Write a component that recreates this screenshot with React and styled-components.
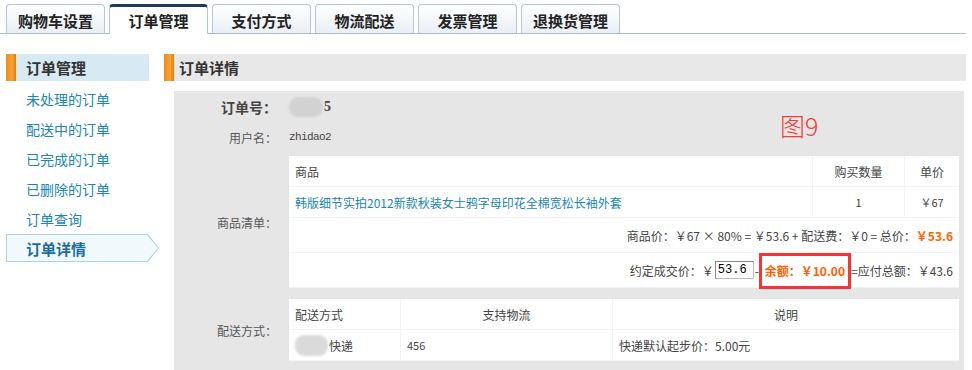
import React from 'react'
import styled, { createGlobalStyle } from 'styled-components'

const GlobalStyle = createGlobalStyle`
  body {
    margin: 0;
    background: #fff;
    font-family: "Noto Sans CJK SC", "Noto Sans", sans-serif;
    color: #333;
  }
`

const tabs = ['购物车设置', '订单管理', '支付方式', '物流配送', '发票管理', '退换货管理']
const menu = ['未处理的订单', '配送中的订单', '已完成的订单', '已删除的订单', '订单查询']

function App() {
  return (
    <>
      <GlobalStyle />
      <Page>
        <TabBar>
          {tabs.map((t, i) => (
            <Tab key={t} active={i === 1}>{t}</Tab>
          ))}
        </TabBar>
        <Body>
          <Sidebar>
            <SideHeader>订单管理</SideHeader>
            {menu.map((m) => (
              <MenuItem key={m}>{m}</MenuItem>
            ))}
            <ActiveItem><span>订单详情</span></ActiveItem>
          </Sidebar>
          <Main>
            <MainHeader>订单详情</MainHeader>
            <Panel>
              <Note>图9</Note>
              <Field h={31}>
                <Label bold>订单号：</Label>
                <Value>
                  <Blur w={34} h={20} />
                  <OrderNo>5</OrderNo>
                </Value>
              </Field>
              <Field h={30}>
                <Label>用户名：</Label>
                <UserName>zhidao2</UserName>
              </Field>
              <Field gap={4}>
                <Label>商品清单：</Label>
                <GoodsTable>
                  <Cell h={31}>商品</Cell>
                  <Cell h={31} center line>购买数量</Cell>
                  <Cell h={31} center line>单价</Cell>
                  <Cell h={31}><ProductLink>韩版细节实拍2012新款秋装女士鸦字母印花全棉宽松长袖外套</ProductLink></Cell>
                  <Cell h={31} center line small>1</Cell>
                  <Cell h={31} center line small>￥67</Cell>
                  <SumRow>
                    商品价：￥67 × 80% = ￥53.6 + 配送费：￥0 = 总价：<Orange>￥53.6</Orange>
                  </SumRow>
                  <SumRow>
                    约定成交价：￥<PriceInput defaultValue="53.6" />
                    <Dash>-</Dash>
                    <RedBox><Orange>余额：￥10.00</Orange></RedBox>
                    =应付总额：￥43.6
                  </SumRow>
                </GoodsTable>
              </Field>
              <Field gap={11}>
                <Label>配送方式：</Label>
                <ShipTable>
                  <Cell h={31}>配送方式</Cell>
                  <Cell h={31} center line>支持物流</Cell>
                  <Cell h={31} center line>说明</Cell>
                  <Cell h={31}><Blur w={33} h={21} light />快递</Cell>
                  <Cell h={31} line small>456</Cell>
                  <Cell h={31} line>快递默认起步价：5.00元</Cell>
                </ShipTable>
              </Field>
            </Panel>
          </Main>
        </Body>
      </Page>
    </>
  )
}

export default App

const Page = styled.div`
  width: 972px;
  height: 370px;
  overflow: hidden;
  padding-top: 4px;
  box-sizing: border-box;
`

const TabBar = styled.div`
  display: flex;
  gap: 4px;
  padding-left: 6px;
  margin-right: 6px;
  border-bottom: 1px solid #a9bccb;
  height: 29px;
`

const Tab = styled.div`
  width: 99px;
  height: ${(p) => (p.active ? '30px' : '29px')};
  box-sizing: border-box;
  display: flex;
  align-items: center;
  justify-content: center;
  font-size: 15px;
  font-weight: bold;
  color: #222;
  border: 1px solid #b6c6d4;
  border-bottom: none;
  border-top: ${(p) => (p.active ? '3px solid #1c3b5e' : '1px solid #b6c6d4')};
  border-radius: 4px 4px 0 0;
  background: ${(p) => (p.active ? '#fff' : 'linear-gradient(#ffffff, #e9eff6)')};
  padding-top: ${(p) => (p.active ? '0' : '2px')};
`

const Body = styled.div`
  display: flex;
  gap: 6px;
  padding: 20px 6px 0 6px;
`

const Sidebar = styled.div`
  width: 152px;
  flex-shrink: 0;
  display: flex;
  flex-direction: column;
`

const orangeBar = `
  content: '';
  position: absolute;
  left: 0;
  top: 0;
  bottom: 0;
  width: 10px;
  background: linear-gradient(to right, #f08a12, #f7a33c 60%, #e47c08);
  border-right: 1px solid #f6e3c8;
`

const SideHeader = styled.div`
  position: relative;
  width: 143px;
  height: 27px;
  background: #d7e9f2;
  display: flex;
  align-items: center;
  padding-left: 20px;
  box-sizing: border-box;
  font-size: 15px;
  font-weight: bold;
  color: #333;
  margin-bottom: 3px;
  &::before {
    ${orangeBar}
  }
`

const MenuItem = styled.div`
  height: 30px;
  display: flex;
  align-items: center;
  padding-left: 20px;
  font-size: 14px;
  color: #1a86b4;
`

const ActiveItem = styled.div`
  position: relative;
  width: 153px;
  height: 28px;
  display: flex;
  align-items: center;
  padding-left: 20px;
  box-sizing: border-box;
  font-size: 15px;
  font-weight: bold;
  color: #1a6e9c;
  background: #a9d3e8;
  clip-path: polygon(0 0, calc(100% - 11px) 0, 100% 50%, calc(100% - 11px) 100%, 0 100%);
  &::before {
    content: '';
    position: absolute;
    inset: 1px 1px 1px 1px;
    background: #f1f9fd;
    clip-path: polygon(0 0, calc(100% - 11px) 0, 100% 50%, calc(100% - 11px) 100%, 0 100%);
  }
  span {
    position: relative;
  }
`

const Main = styled.div`
  flex: 1;
  display: flex;
  flex-direction: column;
`

const MainHeader = styled.div`
  position: relative;
  height: 27px;
  background: #e8e8e8;
  display: flex;
  align-items: center;
  padding-left: 15px;
  font-size: 15px;
  font-weight: bold;
  color: #333;
  &::before {
    ${orangeBar}
  }
`

const Panel = styled.div`
  position: relative;
  margin: 10px 2px 0 10px;
  background: #e6e6e6;
  padding: 0 5px 20px 0;
  display: flex;
  flex-direction: column;
`

const Note = styled.div`
  position: absolute;
  left: 606px;
  top: 16px;
  font-size: 25px;
  color: #f33b3b;
  font-weight: 300;
`

const Field = styled.div`
  display: grid;
  grid-template-columns: 115px 1fr;
  align-items: center;
  min-height: ${(p) => (p.h ? `${p.h}px` : 'auto')};
  margin-top: ${(p) => (p.gap ? `${p.gap}px` : '0')};
`

const Label = styled.div`
  text-align: right;
  padding-right: 12px;
  font-size: ${(p) => (p.bold ? '14px' : '12px')};
  font-weight: ${(p) => (p.bold ? 'bold' : 'normal')};
  color: ${(p) => (p.bold ? '#444' : '#555')};
`

const Value = styled.div`
  display: flex;
  align-items: center;
`

const Blur = styled.span`
  display: inline-block;
  width: ${(p) => p.w}px;
  height: ${(p) => p.h}px;
  border-radius: 9px;
  background: ${(p) => (p.light ? '#dadada' : '#d2d2d2')};
  filter: blur(1px);
  margin-right: 1px;
  vertical-align: middle;
`

const OrderNo = styled.span`
  font-family: "Liberation Serif", serif;
  font-weight: bold;
  font-size: 14px;
  color: #444;
`

const UserName = styled.div`
  font-family: "Liberation Mono", monospace;
  font-size: 11px;
  letter-spacing: -0.6px;
  color: #444;
`

const GoodsTable = styled.div`
  display: grid;
  grid-template-columns: 1fr 92px 55px;
  background: #fff;
`

const ShipTable = styled.div`
  display: grid;
  grid-template-columns: 111px 212px 1fr;
  background: #fff;
`

const Cell = styled.div`
  height: ${(p) => p.h}px;
  box-sizing: border-box;
  display: flex;
  align-items: center;
  justify-content: ${(p) => (p.center ? 'center' : 'flex-start')};
  padding: 0 6px;
  font-size: ${(p) => (p.small ? '11px' : '12px')};
  color: #444;
  border-bottom: 1px solid #f0f4f9;
  border-left: ${(p) => (p.line ? '1px solid #f0f4f9' : 'none')};
`

const ProductLink = styled.span`
  color: #1a86b4;
  font-size: 12px;
`

const SumRow = styled.div`
  grid-column: 1 / -1;
  height: 35px;
  box-sizing: border-box;
  display: flex;
  align-items: center;
  justify-content: flex-end;
  padding-right: 6px;
  font-size: 12px;
  color: #444;
  border-bottom: 1px solid #f0f4f9;
  white-space: pre;
`

const Orange = styled.span`
  color: #ff6000;
  font-weight: bold;
`

const PriceInput = styled.input`
  width: 39px;
  height: 18px;
  box-sizing: border-box;
  border: 1px solid #bbb;
  border-top-color: #888;
  border-left-color: #888;
  font-family: "Liberation Mono", monospace;
  font-size: 12px;
  padding: 0 2px;
  margin: 0 1px;
`

const Dash = styled.span`
  width: 4px;
  overflow: hidden;
`

const RedBox = styled.span`
  display: inline-flex;
  align-items: center;
  height: 36px;
  box-sizing: border-box;
  border: 3px solid #f23535;
  padding: 0 3px 0 3px;
  margin: 0 0 -1px 0;
`
